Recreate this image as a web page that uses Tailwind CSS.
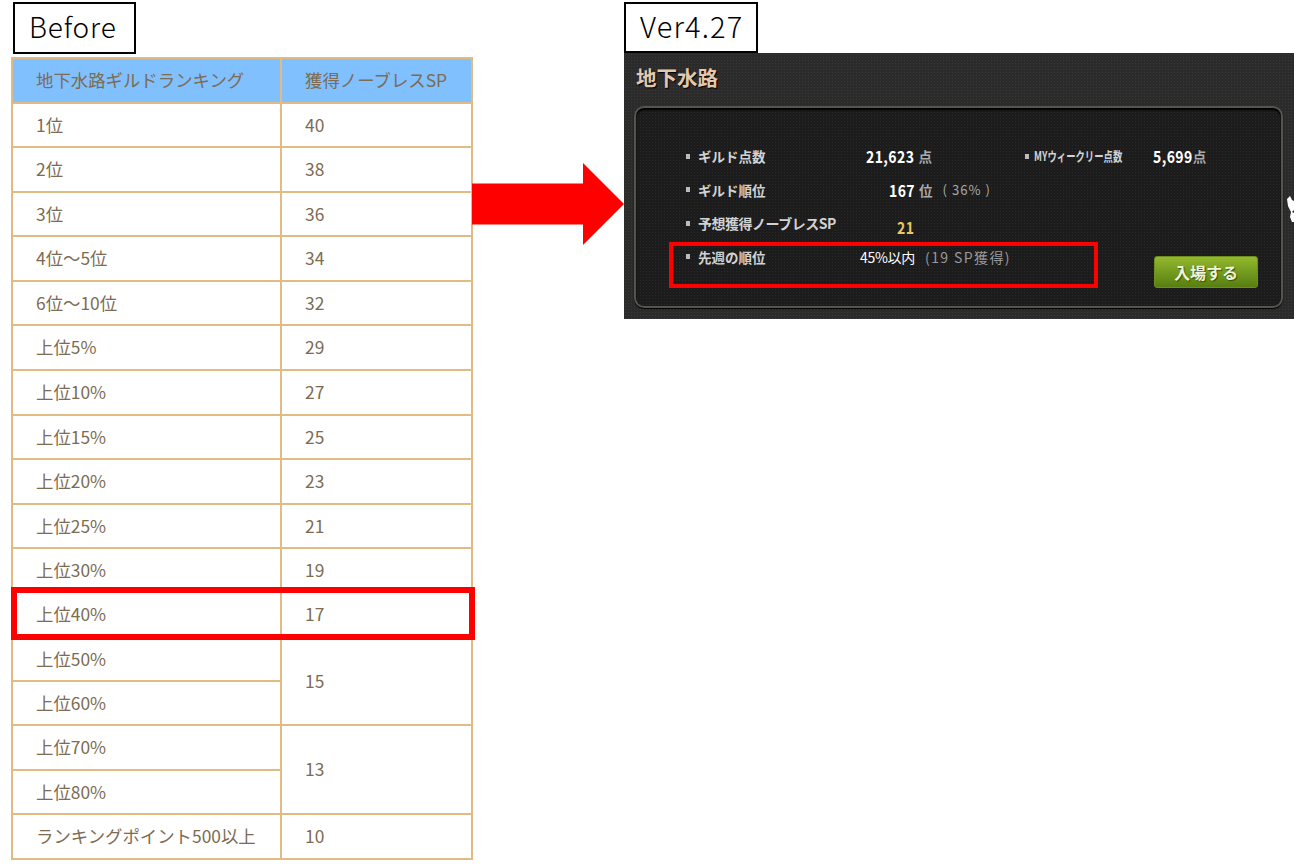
<!DOCTYPE html>
<html lang="ja">
<head>
<meta charset="UTF-8">
<title>Before / Ver4.27</title>
<script src="https://cdn.jsdelivr.net/npm/@tailwindcss/browser@4"></script>
</head>
<body class="bg-white font-['Noto_Sans_CJK_JP','Noto_Sans',sans-serif]">
<div class="relative w-[1294px] h-[865px] overflow-hidden flex">

  <!-- left: table -->
  <div class="w-[624px] shrink-0 pl-[11px] pt-[2px]">
    <div class="ml-[2px] w-[123px] h-[52px] border-2 border-black flex items-center pl-[14px] pb-[5px] text-[28px] font-light tracking-[0.03em] text-black leading-none">Before</div>
    <table class="mt-[3px] w-[462px] table-fixed border-collapse text-[17.4px] text-[#7d6b52] border-2 border-[#e0bc84]">
      <colgroup><col class="w-[269px]"><col></colgroup>
      <tr class="h-[45px] bg-[#80c0ff]">
        <td class="border-2 border-[#e0bc84] pl-[23px] pb-[2px] leading-none">地下水路ギルドランキング</td>
        <td class="border-2 border-[#e0bc84] pl-[23px] pb-[2px] leading-none">獲得ノーブレスSP</td>
      </tr>
      <tr class="h-[44px]"><td class="border-2 border-[#e0bc84] pl-[23px] pb-[1px] leading-none">1位</td><td class="border-2 border-[#e0bc84] pl-[23px] pb-[1px] leading-none">40</td></tr>
      <tr class="h-[45px]"><td class="border-2 border-[#e0bc84] pl-[23px] pb-[1px] leading-none">2位</td><td class="border-2 border-[#e0bc84] pl-[23px] pb-[1px] leading-none">38</td></tr>
      <tr class="h-[44px]"><td class="border-2 border-[#e0bc84] pl-[23px] pb-[1px] leading-none">3位</td><td class="border-2 border-[#e0bc84] pl-[23px] pb-[1px] leading-none">36</td></tr>
      <tr class="h-[45px]"><td class="border-2 border-[#e0bc84] pl-[23px] pb-[1px] leading-none">4位～5位</td><td class="border-2 border-[#e0bc84] pl-[23px] pb-[1px] leading-none">34</td></tr>
      <tr class="h-[44px]"><td class="border-2 border-[#e0bc84] pl-[23px] pb-[1px] leading-none">6位～10位</td><td class="border-2 border-[#e0bc84] pl-[23px] pb-[1px] leading-none">32</td></tr>
      <tr class="h-[45px]"><td class="border-2 border-[#e0bc84] pl-[23px] pb-[1px] leading-none">上位5%</td><td class="border-2 border-[#e0bc84] pl-[23px] pb-[1px] leading-none">29</td></tr>
      <tr class="h-[45px]"><td class="border-2 border-[#e0bc84] pl-[23px] pb-[1px] leading-none">上位10%</td><td class="border-2 border-[#e0bc84] pl-[23px] pb-[1px] leading-none">27</td></tr>
      <tr class="h-[44px]"><td class="border-2 border-[#e0bc84] pl-[23px] pb-[1px] leading-none">上位15%</td><td class="border-2 border-[#e0bc84] pl-[23px] pb-[1px] leading-none">25</td></tr>
      <tr class="h-[45px]"><td class="border-2 border-[#e0bc84] pl-[23px] pb-[1px] leading-none">上位20%</td><td class="border-2 border-[#e0bc84] pl-[23px] pb-[1px] leading-none">23</td></tr>
      <tr class="h-[44px]"><td class="border-2 border-[#e0bc84] pl-[23px] pb-[1px] leading-none">上位25%</td><td class="border-2 border-[#e0bc84] pl-[23px] pb-[1px] leading-none">21</td></tr>
      <tr class="h-[44px]"><td class="border-2 border-[#e0bc84] pl-[23px] pb-[1px] leading-none">上位30%</td><td class="border-2 border-[#e0bc84] pl-[23px] pb-[1px] leading-none">19</td></tr>
      <tr class="h-[45px]"><td class="border-2 border-[#e0bc84] pl-[23px] pb-[1px] leading-none">上位40%</td><td class="border-2 border-[#e0bc84] pl-[23px] pb-[1px] leading-none">17</td></tr>
      <tr class="h-[44px]"><td class="border-2 border-[#e0bc84] pl-[23px] pb-[1px] leading-none">上位50%</td><td rowspan="2" class="border-2 border-[#e0bc84] pl-[23px] pb-[1px] leading-none">15</td></tr>
      <tr class="h-[44px]"><td class="border-2 border-[#e0bc84] pl-[23px] pb-[1px] leading-none">上位60%</td></tr>
      <tr class="h-[45px]"><td class="border-2 border-[#e0bc84] pl-[23px] pb-[1px] leading-none">上位70%</td><td rowspan="2" class="border-2 border-[#e0bc84] pl-[23px] pb-[1px] leading-none">13</td></tr>
      <tr class="h-[44px]"><td class="border-2 border-[#e0bc84] pl-[23px] pb-[1px] leading-none">上位80%</td></tr>
      <tr class="h-[45px]"><td class="border-2 border-[#e0bc84] pl-[23px] pb-[1px] leading-none">ランキングポイント500以上</td><td class="border-2 border-[#e0bc84] pl-[23px] pb-[1px] leading-none">10</td></tr>
    </table>
  </div>

  <!-- right: label + game panel -->
  <div class="w-[670px] pt-[2px]">
    <div class="w-[134px] h-[51px] bg-white border-2 border-black flex items-center pl-[14px] pb-[5px] text-[29px] font-light tracking-[0.04em] text-black leading-none">Ver4.27</div>
    <div class="relative h-[266px] bg-[#2b2b2b] bg-[radial-gradient(#3a3a3a_1px,transparent_1px)] bg-[size:3px_3px] pt-[11px]">
      <div class="pl-[12px] h-[26px] text-[20.500px] font-bold leading-[26px] text-[#e3c8ac] [text-shadow:1px_1px_1px_#000]">地下水路</div>
      <div class="relative mt-[16px] ml-[10px] w-[649px] h-[202px] rounded-[10px] border-2 border-[#55554f] bg-[#1c1c1c] bg-[radial-gradient(#2a2a2a_1px,transparent_1px)] bg-[size:3px_3px] pt-[39px] pl-[50px] text-[13.500px] font-bold text-[#d2d2d2] shadow-[inset_0_2px_2px_#000,0_1px_1px_#000]">

        <div class="h-[33.5px] flex items-start leading-[18px]">
          <div class="w-[180px] flex items-center"><span class="w-[4px] h-[5px] bg-[#bbb] mr-[8px]"></span><span>ギルド点数</span></div>
          <div class="w-[159px] flex items-center"><span class="text-white text-[14px] tracking-[0.03em] scale-y-[1.15]">21,623</span><span class="ml-[4px] text-[#aaa]">点</span></div>
          <div class="w-[128px] flex items-center"><span class="shrink-0 w-[4px] h-[5px] bg-[#bbb] mr-[5px]"></span><span class="text-[13px] whitespace-nowrap origin-left scale-x-[0.72]">MYウィークリー点数</span></div>
          <div class="flex items-center"><span class="text-white text-[14px] tracking-[0.03em] scale-y-[1.15]">5,699</span><span class="text-[#aaa]">点</span></div>
        </div>
        <div class="h-[33.5px] flex items-start leading-[18px]">
          <div class="w-[203px] flex items-center"><span class="w-[4px] h-[5px] bg-[#bbb] mr-[8px]"></span><span>ギルド順位</span></div>
          <div class="flex items-center"><span class="text-white text-[14px] tracking-[0.03em] scale-y-[1.15]">167</span><span class="ml-[4px] text-[#aaa]">位</span><span class="ml-[10px] text-[#aaa] font-normal text-[13px] tracking-[0.08em] whitespace-pre">( 36% )</span></div>
        </div>
        <div class="h-[33.5px] flex items-start leading-[18px]">
          <div class="w-[211px] flex items-center"><span class="shrink-0 w-[4px] h-[5px] bg-[#bbb] mr-[8px]"></span><span class="text-[14px] tracking-[-0.035em] whitespace-nowrap">予想獲得ノーブレスSP</span></div>
          <div class="mt-[4px] text-[#e8c860] text-[14px] tracking-[0.03em] scale-y-[1.15]">21</div>
        </div>
        <div class="flex items-start leading-[18px]">
          <div class="w-[174px] flex items-center"><span class="w-[4px] h-[5px] bg-[#bbb] mr-[8px]"></span><span>先週の順位</span></div>
          <div class="flex items-center font-normal whitespace-nowrap"><span class="text-white text-[14px] tracking-[-0.02em]">45%以内</span><span class="ml-[10px] text-[#999] text-[14px] tracking-[0.1em]">(19 SP獲得)</span></div>
        </div>

        <div class="absolute left-[518px] bottom-[18px] w-[104px] h-[32px] rounded-[3px] border border-[#6f8f1c] bg-gradient-to-b from-[#93b82e] to-[#577f10] text-[#eef3dc] font-bold text-[16px] flex items-center justify-center [text-shadow:1px_1px_1px_#3a5208]">入場する</div>
      </div>
    </div>
  </div>

  <!-- annotations on top -->
  <svg class="absolute left-[472px] top-[163px]" width="152" height="83" viewBox="0 0 152 83"><path d="M0 20.500H111V0L152 41L111 82V61.500H0Z" fill="#ff0000"/></svg>
  <div class="absolute left-[11px] top-[587px] w-[464px] h-[53px] border-[6px] border-[#ff0000]"></div>
  <div class="absolute left-[669px] top-[242px] w-[429px] h-[46px] border-[4px] border-[#ff0000]"></div>
  <svg class="absolute left-[1287px] top-[195px]" width="7" height="27" viewBox="0 0 7 27"><path d="M0 4L3 1L5 5L7 6V15L5 17L7 18V27H5L3 22L4 17L1 11Z" fill="#fff"/></svg>
</div>
</body>
</html>
